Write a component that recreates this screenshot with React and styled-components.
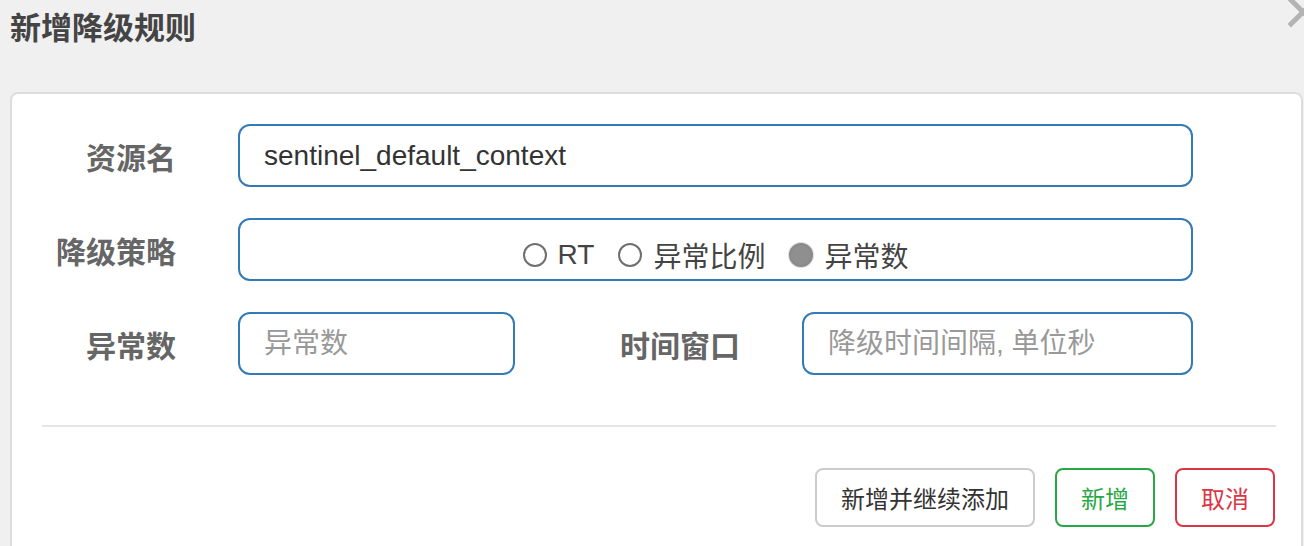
import React from "react";
import styled, { createGlobalStyle } from "styled-components";

const GlobalStyle = createGlobalStyle`
    html, body {
        margin: 0;
        padding: 0;
        background: #f0f0f0;
        overflow: hidden;
    }
    body {
        font-family: "Liberation Sans", "Noto Sans CJK SC", sans-serif;
    }
`;

const Dialog = styled.div`
    position: relative;
    width: 1304px;
    height: 546px;
    overflow: hidden;
`;

const Header = styled.div`
    height: 92px;
    padding-left: 10px;
    box-sizing: border-box;
`;

const Title = styled.h4`
    margin: 0;
    padding-top: 10px;
    font-size: 31px;
    line-height: 38px;
    font-weight: bold;
    color: #444;
`;

const CloseButton = styled.button`
    position: absolute;
    top: -4px;
    right: -15px;
    width: 32px;
    height: 32px;
    padding: 0;
    border: none;
    background: none;
`;

const Card = styled.div`
    margin: 0 1px 0 10px;
    height: 600px;
    background: #fff;
    border: 2px solid #ddd;
    border-radius: 8px;
    box-sizing: border-box;
    padding-top: 30px;
`;

const Row = styled.div`
    display: flex;
    align-items: center;
    margin-bottom: 31px;
    padding-right: 108px;
    &:last-of-type {
        margin-bottom: 0;
    }
`;

const Label = styled.label`
    width: ${(p) => p.$width || 164}px;
    flex-shrink: 0;
    text-align: right;
    font-size: 30px;
    font-weight: bold;
    color: #666;
    margin-right: 62px;
`;

const Input = styled.input`
    box-sizing: border-box;
    height: 63px;
    width: ${(p) => (p.$width ? `${p.$width}px` : "auto")};
    flex: ${(p) => (p.$width ? "none" : "1")};
    min-width: 0;
    border: 2px solid #337ab7;
    border-radius: 12px;
    padding: 0 24px;
    font-family: inherit;
    font-size: 28px;
    color: #333;
    outline: none;
    &::placeholder {
        color: #999;
    }
`;

const RadioBox = styled.div`
    flex: 1;
    box-sizing: border-box;
    height: 63px;
    border: 2px solid #337ab7;
    border-radius: 12px;
    display: flex;
    align-items: center;
    justify-content: center;
    padding-top: 10px;
    gap: 24px;
`;

const RadioOption = styled.label`
    display: flex;
    align-items: center;
    gap: 11px;
    font-size: 28px;
    color: #444;
`;

const RadioDot = styled.span`
    box-sizing: border-box;
    width: 24px;
    height: 24px;
    border-radius: 50%;
    border: 2px solid ${(p) => (p.$checked ? "#8a8a8a" : "#6f6f6f")};
    background: ${(p) => (p.$checked ? "#8f8f8f" : "#fff")};
    box-shadow: ${(p) => (p.$checked ? "0 0 0 1px #ddd" : "none")};
`;

const Divider = styled.hr`
    margin: 50px 25px 0 30px;
    border: none;
    border-top: 2px solid #e5e5e5;
`;

const Footer = styled.div`
    display: flex;
    justify-content: flex-end;
    gap: 20px;
    margin-top: 41px;
    padding-right: 26px;
`;

const tones = {
    default: { border: "#ccc", color: "#333" },
    success: { border: "#28a745", color: "#28a745" },
    danger: { border: "#dc3545", color: "#dc3545" },
};

const Button = styled.button`
    box-sizing: border-box;
    height: 59px;
    min-width: 100px;
    padding: 0 24px;
    background: #fff;
    border: 2px solid ${(p) => tones[p.$tone].border};
    color: ${(p) => tones[p.$tone].color};
    border-radius: 8px;
    font-family: inherit;
    font-size: 24px;
`;

export default function App() {
    return <>
        <GlobalStyle />
        <Dialog>
            <Header>
                <Title>新增降级规则</Title>
            </Header>
            <CloseButton aria-label="close">
                <svg width="32" height="32" viewBox="0 0 32 32">
                    <path d="M4 4 L28 28 M28 4 L4 28" stroke="#b3b3b3" strokeWidth="5" strokeLinecap="square" />
                </svg>
            </CloseButton>
            <Card>
                <Row>
                    <Label>资源名</Label>
                    <Input defaultValue="sentinel_default_context" />
                </Row>
                <Row>
                    <Label>降级策略</Label>
                    <RadioBox>
                        <RadioOption><RadioDot />RT</RadioOption>
                        <RadioOption><RadioDot />异常比例</RadioOption>
                        <RadioOption><RadioDot $checked />异常数</RadioOption>
                    </RadioBox>
                </Row>
                <Row>
                    <Label>异常数</Label>
                    <Input $width={277} placeholder="异常数" />
                    <Label $width={225}>时间窗口</Label>
                    <Input placeholder="降级时间间隔, 单位秒" />
                </Row>
                <Divider />
                <Footer>
                    <Button $tone="default">新增并继续添加</Button>
                    <Button $tone="success">新增</Button>
                    <Button $tone="danger">取消</Button>
                </Footer>
            </Card>
        </Dialog>
    </>;
}
